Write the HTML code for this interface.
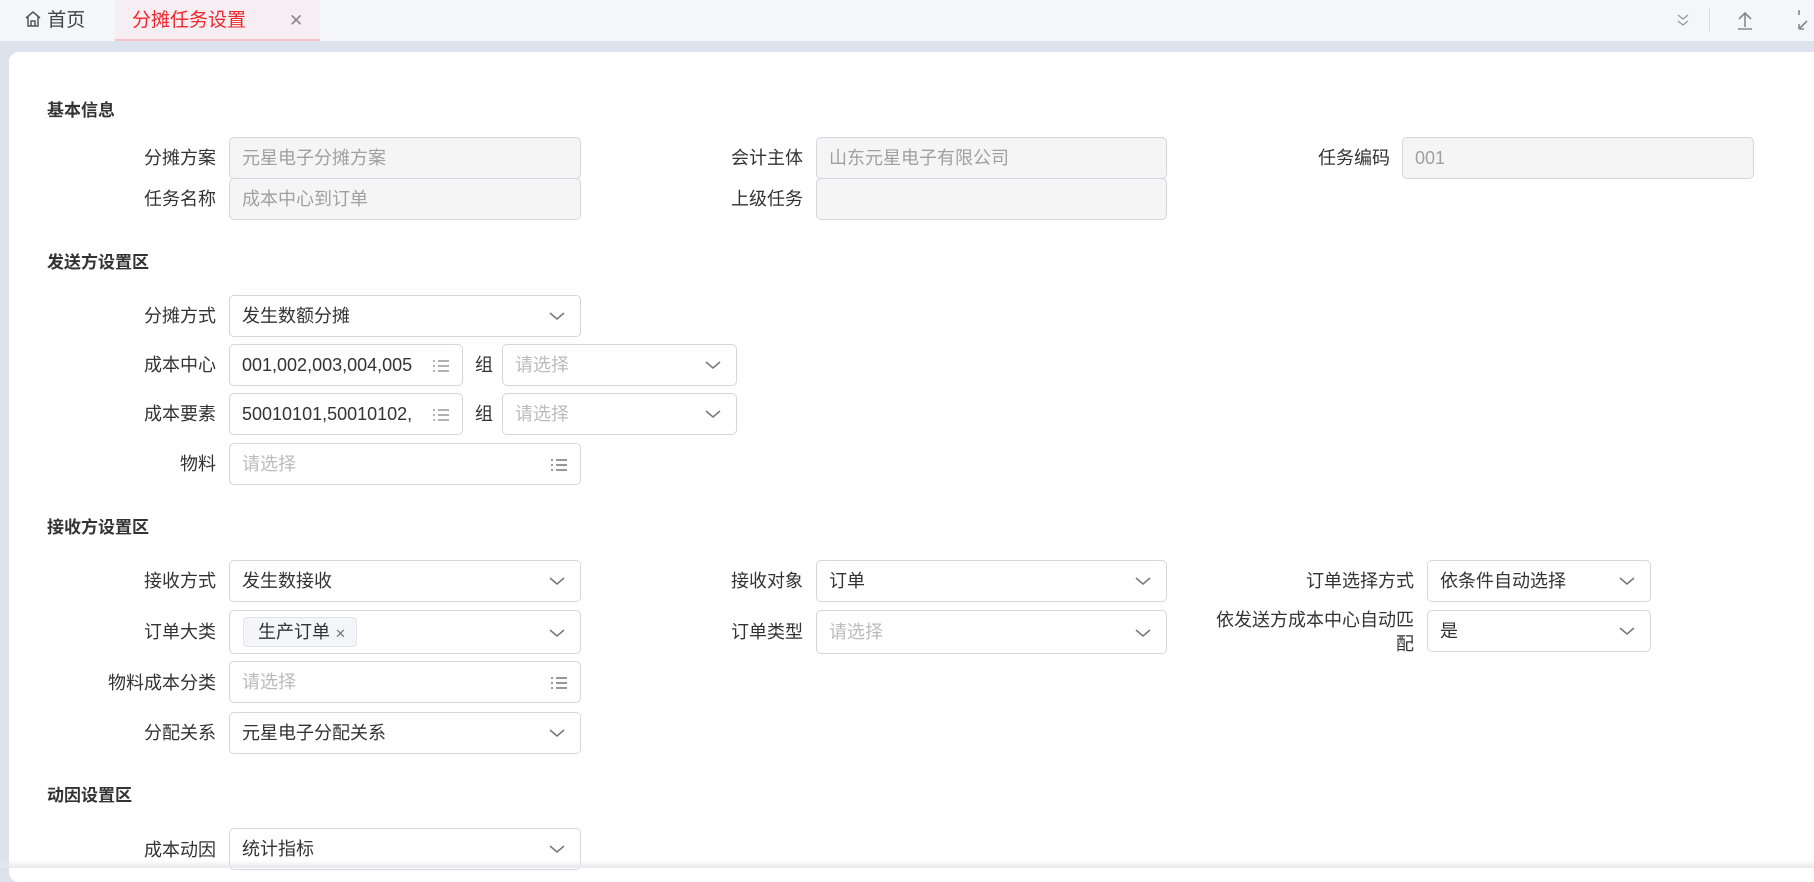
<!DOCTYPE html>
<html><head><meta charset="utf-8"><style>
*{box-sizing:border-box;margin:0;padding:0}
body{width:1814px;height:868px;overflow:hidden;background:#dde3ec;font-family:"Liberation Sans","Noto Sans CJK SC",sans-serif;position:relative;color:#333}
.top{position:absolute;left:0;top:0;width:1814px;height:41px;background:#f5f6fa}
.tab{position:absolute;top:0;height:41px;line-height:41px;font-size:19px}
.card{position:absolute;left:9px;top:52px;width:1820px;height:830px;background:#fff;border-radius:10px}
.sec{position:absolute;left:47px;font-size:17px;font-weight:bold;color:#333}
.lb{position:absolute;font-size:18px;color:#333;text-align:right;width:200px;line-height:22px}
.in{position:absolute;height:42px;border:1px solid #d4d6db;border-radius:5px;background:#fff;font-size:18px;line-height:40px;padding-left:12px;color:#333;white-space:nowrap;overflow:hidden}
.dis{background:#f5f5f5;color:#a0a0a0}
.ph{color:#bbb}
.ar{position:absolute;right:14px;top:14px;width:18px;height:12px}
.li{position:absolute;right:12px;top:13px;width:18px;height:16px;background:#fff}
</style></head><body>
<div class="top"></div>
<div class="tab" style="left:24px;color:#444"><svg width="18" height="18" viewBox="0 0 18 18" style="vertical-align:-2px" fill="none" stroke="#555" stroke-width="1.5"><path d="M2 8 9 2l7 6M4 6.5V16h10V6.5M7 16v-5h4v5"/></svg> 首页</div>
<div class="tab" style="left:115px;width:205px;background:#f6eef2;border-bottom:2px solid #f5c0c8;color:#f2262e;padding-left:17px">分摊任务设置<span style="position:absolute;left:174px;color:#888;font-size:17px">✕</span></div>
<svg style="position:absolute;left:1676px;top:12px" width="14" height="16" viewBox="0 0 14 16" fill="none" stroke="#999" stroke-width="1.3"><path d="M2 3l5 4 5-4M2 9l5 4 5-4"/></svg>
<div style="position:absolute;left:1709px;top:8px;width:1px;height:24px;background:#ddd"></div>
<svg style="position:absolute;left:1735px;top:10px" width="20" height="20" viewBox="0 0 20 20" fill="none" stroke="#888" stroke-width="1.6"><path d="M10 17V3M4 9l6-6 6 6M3 19h14"/></svg>
<svg style="position:absolute;left:1797px;top:9px" width="17" height="22" viewBox="0 0 17 22" fill="none" stroke="#888" stroke-width="1.6"><path d="M3 2h-1v4M2 20h5M2 20V15M2 20l8-8"/></svg>
<div class="card"></div>

<div class="sec" style="top:96px">基本信息</div>
<div class="lb" style="left:16px;top:147px">分摊方案</div><div class="in dis" style="left:229px;top:137px;width:352px">元星电子分摊方案</div>
<div class="lb" style="left:603px;top:147px">会计主体</div><div class="in dis" style="left:816px;top:137px;width:351px">山东元星电子有限公司</div>
<div class="lb" style="left:1190px;top:147px">任务编码</div><div class="in dis" style="left:1402px;top:137px;width:352px">001</div>
<div class="lb" style="left:16px;top:188px">任务名称</div><div class="in dis" style="left:229px;top:178px;width:352px">成本中心到订单</div>
<div class="lb" style="left:603px;top:188px">上级任务</div><div class="in dis" style="left:816px;top:178px;width:351px"></div>

<div class="sec" style="top:248px">发送方设置区</div>
<div class="lb" style="left:16px;top:305px">分摊方式</div><div class="in" style="left:229px;top:295px;width:352px">发生数额分摊<svg class="ar" viewBox="0 0 18 12" fill="none" stroke="#777" stroke-width="1.5"><path d="M2 3l7 6 7-6"/></svg></div>
<div class="lb" style="left:16px;top:354px">成本中心</div><div class="in" style="left:229px;top:344px;width:234px">001,002,003,004,005<svg class="li" viewBox="0 0 18 16" fill="none" stroke="#999" stroke-width="1.5"><path d="M1 3h2M6 3h11M1 8h2M6 8h11M1 13h2M6 13h11"/></svg></div>
<div class="lb" style="left:475px;top:354px;width:20px;text-align:left">组</div><div class="in ph" style="left:502px;top:344px;width:235px">请选择<svg class="ar" viewBox="0 0 18 12" fill="none" stroke="#777" stroke-width="1.5"><path d="M2 3l7 6 7-6"/></svg></div>
<div class="lb" style="left:16px;top:403px">成本要素</div><div class="in" style="left:229px;top:393px;width:234px">50010101,50010102,<svg class="li" viewBox="0 0 18 16" fill="none" stroke="#999" stroke-width="1.5"><path d="M1 3h2M6 3h11M1 8h2M6 8h11M1 13h2M6 13h11"/></svg></div>
<div class="lb" style="left:475px;top:403px;width:20px;text-align:left">组</div><div class="in ph" style="left:502px;top:393px;width:235px">请选择<svg class="ar" viewBox="0 0 18 12" fill="none" stroke="#777" stroke-width="1.5"><path d="M2 3l7 6 7-6"/></svg></div>
<div class="lb" style="left:16px;top:453px">物料</div><div class="in ph" style="left:229px;top:443px;width:352px">请选择<svg class="li" viewBox="0 0 18 16" fill="none" stroke="#777" stroke-width="1.5"><path d="M1 3h2M6 3h11M1 8h2M6 8h11M1 13h2M6 13h11"/></svg></div>

<div class="sec" style="top:513px">接收方设置区</div>
<div class="lb" style="left:16px;top:570px">接收方式</div><div class="in" style="left:229px;top:560px;width:352px">发生数接收<svg class="ar" viewBox="0 0 18 12" fill="none" stroke="#777" stroke-width="1.5"><path d="M2 3l7 6 7-6"/></svg></div>
<div class="lb" style="left:603px;top:570px">接收对象</div><div class="in" style="left:816px;top:560px;width:351px">订单<svg class="ar" viewBox="0 0 18 12" fill="none" stroke="#777" stroke-width="1.5"><path d="M2 3l7 6 7-6"/></svg></div>
<div class="lb" style="left:1214px;top:570px">订单选择方式</div><div class="in" style="left:1427px;top:560px;width:224px">依条件自动选择<svg class="ar" viewBox="0 0 18 12" fill="none" stroke="#777" stroke-width="1.5"><path d="M2 3l7 6 7-6"/></svg></div>
<div class="lb" style="left:16px;top:621px">订单大类</div><div class="in" style="left:229px;top:610px;width:352px;height:44px;padding-left:13px"><span style="display:inline-block;margin-top:6px;height:30px;line-height:28px;border:1px solid #dfe3ea;background:#f4f5f8;border-radius:4px;padding:0 10px 0 14px;font-size:18px">生产订单 <span style="font-size:13px;color:#777">✕</span></span><svg class="ar" style="top:16px" viewBox="0 0 18 12" fill="none" stroke="#777" stroke-width="1.5"><path d="M2 3l7 6 7-6"/></svg></div>
<div class="lb" style="left:603px;top:621px">订单类型</div><div class="in ph" style="left:816px;top:610px;width:351px;height:44px;line-height:42px">请选择<svg class="ar" style="top:16px" viewBox="0 0 18 12" fill="none" stroke="#777" stroke-width="1.5"><path d="M2 3l7 6 7-6"/></svg></div>
<div class="lb" style="left:1114px;width:300px;top:608px;line-height:24px">依发送方成本中心自动匹<br>配</div><div class="in" style="left:1427px;top:610px;width:224px">是<svg class="ar" viewBox="0 0 18 12" fill="none" stroke="#777" stroke-width="1.5"><path d="M2 3l7 6 7-6"/></svg></div>
<div class="lb" style="left:16px;top:672px">物料成本分类</div><div class="in ph" style="left:229px;top:661px;width:352px">请选择<svg class="li" viewBox="0 0 18 16" fill="none" stroke="#777" stroke-width="1.5"><path d="M1 3h2M6 3h11M1 8h2M6 8h11M1 13h2M6 13h11"/></svg></div>
<div class="lb" style="left:16px;top:722px">分配关系</div><div class="in" style="left:229px;top:712px;width:352px">元星电子分配关系<svg class="ar" viewBox="0 0 18 12" fill="none" stroke="#777" stroke-width="1.5"><path d="M2 3l7 6 7-6"/></svg></div>

<div class="sec" style="top:781px">动因设置区</div>
<div class="lb" style="left:16px;top:839px">成本动因</div><div class="in" style="left:229px;top:828px;width:352px">统计指标<svg class="ar" viewBox="0 0 18 12" fill="none" stroke="#777" stroke-width="1.5"><path d="M2 3l7 6 7-6"/></svg></div>
<div style="position:absolute;left:0;top:860px;width:1814px;height:8px;background:linear-gradient(#fff0,#e6e8ec)"></div>
</body></html>
